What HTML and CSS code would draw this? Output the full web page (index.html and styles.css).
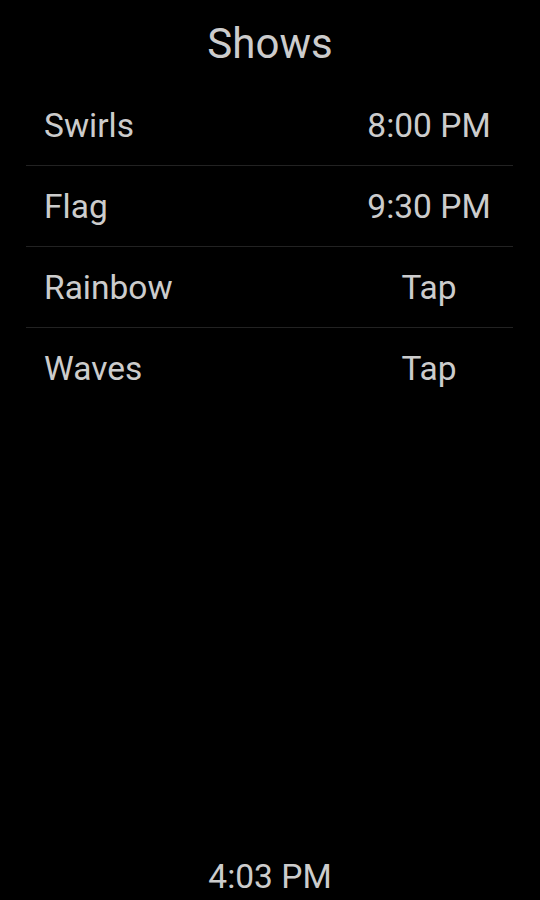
FILE: index.html
```html
<!DOCTYPE html>
<html>
<head>
<meta charset="utf-8">
<link rel="stylesheet" href="styles.css">
</head>
<body>
<div class="screen">
  <div class="title">Shows</div>
  <div class="list">
    <div class="row"><span class="name">Swirls</span><span class="time">8:00 PM</span></div>
    <div class="row"><span class="name">Flag</span><span class="time">9:30 PM</span></div>
    <div class="row"><span class="name">Rainbow</span><span class="time">Tap</span></div>
    <div class="row last"><span class="name">Waves</span><span class="time">Tap</span></div>
  </div>
  <div class="spacer"></div>
  <div class="clock">4:03 PM</div>
</div>
</body>
</html>
```
FILE: styles.css
```css
html, body {
  margin: 0;
  padding: 0;
  background: #000;
}
.screen {
  width: 540px;
  height: 900px;
  display: flex;
  flex-direction: column;
  font-family: Roboto, "Liberation Sans", sans-serif;
  color: #cccccc;
}
.title {
  height: 85px;
  display: flex;
  align-items: center;
  justify-content: center;
  font-size: 42px;
  padding-top: 2px;
  box-sizing: border-box;
}
.list {
  margin: 0 27px 0 26px;
}
.row {
  height: 80px;
  border-bottom: 1px solid #222;
  display: flex;
  align-items: center;
  font-size: 33.5px;
}
.row.last {
  border-bottom-color: transparent;
}
.name {
  flex: 1;
  padding-left: 18px;
  padding-top: 1px;
}
.time {
  width: 160px;
  text-align: center;
  margin-right: 4px;
  padding-top: 1px;
}
.spacer {
  flex: 1;
}
.clock {
  height: 50px;
  display: flex;
  align-items: center;
  justify-content: center;
  font-size: 33.5px;
  padding-top: 3px;
  box-sizing: border-box;
}
```
